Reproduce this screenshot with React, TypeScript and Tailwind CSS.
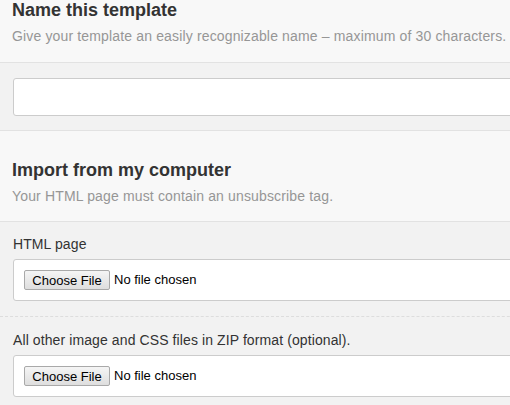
import React from "react";

function FileBox() {
  return (
    <div className="h-[42px] bg-white border border-[#cccccc] rounded-[3px] flex items-center pl-[10px]">
      <div className="h-[20px] w-[86px] flex items-center justify-center border border-[#a9a9a9] rounded-[2px] bg-gradient-to-b from-[#f5f5f5] to-[#dedede] text-[13px] text-black leading-none">
        Choose File
      </div>
      <span className="ml-[4px] text-[13px] text-black">No file chosen</span>
    </div>
  );
}

export default function App() {
  return (
    <div className="w-[510px] h-[405px] overflow-hidden font-[family-name:Liberation_Sans,Arial,sans-serif] bg-[#f2f2f2]">
      <div className="w-[560px]">
        <div className="bg-[#f8f8f8] px-[12px] pb-[16px] border-b border-[#e2e2e2]">
          <div className="text-[18px] leading-[20px] font-bold text-[#333333]">Name this template</div>
          <div className="mt-[6px] text-[14px] leading-[20px] tracking-[0.15px] text-[#969696]">
            Give your template an easily recognizable name – maximum of 30 characters.
          </div>
        </div>
        <div className="bg-[#f2f2f2] pt-[15px] pb-[14px] px-[13px] border-b border-[#e2e2e2]">
          <div className="h-[38px] bg-white border border-[#cccccc] rounded-[3px]" />
        </div>
        <div className="bg-[#f8f8f8] pt-[29px] pb-[15px] px-[12px] border-b border-[#e2e2e2]">
          <div className="text-[18px] leading-[20px] font-bold text-[#333333]">Import from my computer</div>
          <div className="mt-[6px] text-[14px] leading-[20px] tracking-[0.15px] text-[#969696]">
            Your HTML page must contain an unsubscribe tag.
          </div>
        </div>
        <div className="bg-[#f2f2f2] pt-[12px] pb-[8px] px-[13px]">
          <div className="text-[14px] leading-[20px] tracking-[0.1px] text-[#333333]">HTML page</div>
          <div className="mt-[5px]">
            <FileBox />
          </div>
          <div className="-mx-[13px] mt-[15px] border-t border-dashed border-[#dddddd]" />
          <div className="pt-[13px] text-[14px] leading-[20px] tracking-[0.1px] text-[#333333]">
            All other image and CSS files in ZIP format (optional).
          </div>
          <div className="mt-[5px]">
            <FileBox />
          </div>
        </div>
      </div>
    </div>
  );
}
